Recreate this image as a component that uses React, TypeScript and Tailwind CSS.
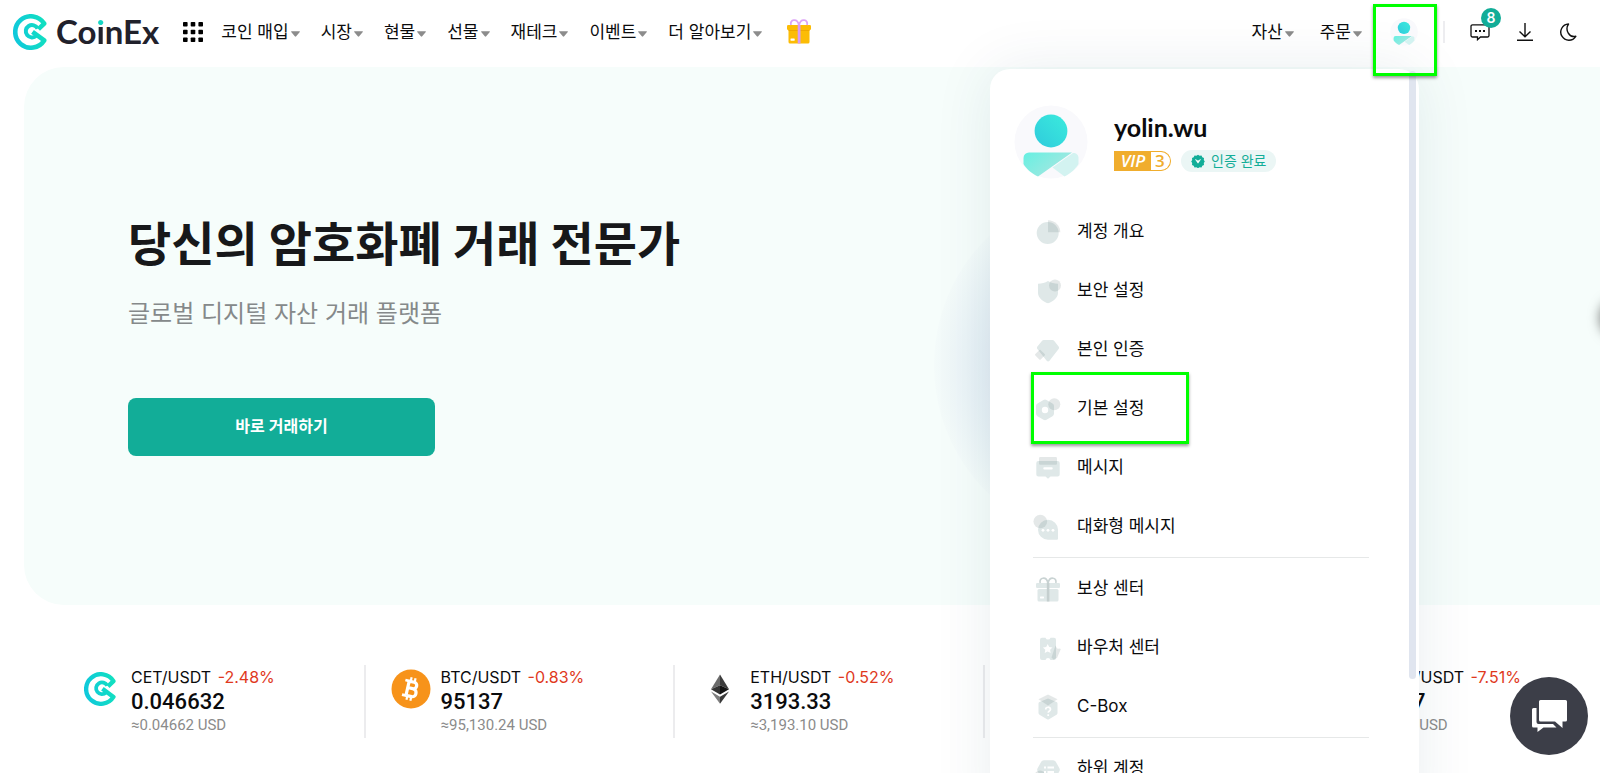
import React from "react";

const BASE = "#dfe8e8";
const TINT = "#5f7474";

function CoinExMark({ className, id }: { className: string; id: string }) {
  return (
    <svg viewBox="0 0 36 36" className={className} fill="none" aria-hidden="true">
      <defs>
        <linearGradient id={id} x1="0" y1="18" x2="36" y2="12" gradientUnits="userSpaceOnUse">
          <stop offset="0" stopColor="#0fc8dc" />
          <stop offset="1" stopColor="#12e2bd" />
        </linearGradient>
      </defs>
      <g stroke={`url(#${id})`} strokeWidth="4.6" strokeLinejoin="round">
        <path d="M25.400 15.200 31.200 9.600A15.700 15.700 0 1 0 31.200 26.400L19.500 17.800" />
        <path d="M24.600 14.600A6.200 6.200 0 1 0 23.400 21.600" strokeWidth="4" />
      </g>
    </svg>
  );
}

function Avatar({ className, id }: { className: string; id: string }) {
  return (
    <svg viewBox="0 0 74 74" className={className} aria-hidden="true">
      <defs>
        <linearGradient id={`${id}-head`} x1="0" y1="1" x2="1" y2="0">
          <stop offset="0" stopColor="#2fcbdc" />
          <stop offset="1" stopColor="#3bebdd" />
        </linearGradient>
        <linearGradient id={`${id}-body`} x1="0" y1="0" x2="1" y2="0.6">
          <stop offset="0" stopColor="#66f0e2" />
          <stop offset="1" stopColor="#a9e6e0" />
        </linearGradient>
      </defs>
      <circle cx="37" cy="37" r="36.5" fill="#f9f9fc" />
      <circle cx="37" cy="26" r="16.4" fill={`url(#${id}-head)`} />
      <path d="M15 47.500h43L24 71.500C17 68 12 63.500 9.500 59V53a5.500 5.500 0 0 1 5.500-5.500Z" fill={`url(#${id}-body)`} />
      <path d="m38.500 62.500 20.500-14.500c3.500 0 5.500 2 5.500 5v6C62 63.500 57 68 50.500 71.500Z" fill="#d3f3f1" />
    </svg>
  );
}

function Caret() {
  return (
    <svg viewBox="0 0 9 6" className="mt-1 h-1.5 w-[9px] fill-[#8c8c8c]" aria-hidden="true">
      <path d="M.6.2h7.800c.5 0 .7.5.4.9L5.200 5.300a.9.9 0 0 1-1.400 0L.2 1.100C-.1.700.1.200.6.200Z" />
    </svg>
  );
}

function NavItem({ label }: { label: string }) {
  return (
    <button type="button" className="flex items-center gap-0.5 whitespace-nowrap text-[17px] leading-6">
      {label}
      <Caret />
    </button>
  );
}

function GiftColor() {
  return (
    <svg viewBox="0 0 24 25" className="h-[25px] w-6" fill="none" aria-hidden="true">
      <rect x="1.500" y="8" width="21" height="16.500" rx="1.500" fill="#fcbc05" />
      <rect x="0" y="6" width="24" height="5" rx="1.200" fill="#fcbc05" />
      <path d="M1.500 11h21v1h-21z" fill="#f0a800" />
      <rect x="10.700" y="6" width="2.800" height="18.500" fill="#d79af5" />
      <path d="M11.800 6C11.200 2.500 9 .9 6.800 1.100 4.500 1.300 3.300 3.500 4 6M12.200 6c.6-3.500 2.800-5.100 5-4.900 2.300.2 3.500 2.400 2.800 4.900" stroke="#dca4f7" strokeWidth="1.800" />
      <rect x="3.500" y="19.500" width="4.200" height="2.200" rx=".4" fill="#fff" />
    </svg>
  );
}

const menuIcons: Record<string, React.ReactNode> = {
  overview: (
    <>
      <circle cx="12.700" cy="14" r="11" fill={BASE} />
      <path d="M13 13.300V1.200a12.200 12.200 0 0 1 12.300 12.100Z" fill={TINT} opacity=".17" />
    </>
  ),
  security: (
    <>
      <path d="M3 5.800c4 0 7-1 10-2.800 3 1.800 6 2.800 10 2.800V15c0 5-5.500 8.800-10 10.300C8.500 23.800 3 20 3 15Z" fill={BASE} />
      <circle cx="20" cy="7.600" r="6" fill={TINT} opacity=".17" />
    </>
  ),
  identity: (
    <>
      <path d="M8.800 3h8.600c.8 0 1.400.3 1.900 1l4.300 5.600c.6.8.6 1.700 0 2.500l-9.100 11.700c-.8 1-2 1-2.800 0L2.400 12.100c-.6-.8-.6-1.700 0-2.500L6.900 4c.5-.7 1.100-1 1.900-1Z" fill={BASE} />
      <rect x="1.200" y="14" width="7.600" height="7.600" rx="1" transform="rotate(45 5 17.800)" fill={TINT} opacity=".17" />
    </>
  ),
  preferences: (
    <>
      <path fillRule="evenodd" d="M8.500 4a3 3 0 0 1 3 0l6 3.400a3 3 0 0 1 1.500 2.600v7.600a3 3 0 0 1-1.500 2.600l-6 3.500a3 3 0 0 1-3 0l-6-3.500A3 3 0 0 1 1 17.600V10a3 3 0 0 1 1.500-2.600ZM10 10.800a3.200 3.200 0 1 0 0 6.400 3.200 3.200 0 0 0 0-6.400Z" fill={BASE} />
      <circle cx="19.300" cy="8.300" r="6" fill={TINT} opacity=".17" />
    </>
  ),
  message: (
    <>
      <path d="M3.300 6h19.400a2 2 0 0 1 2 2v11.500a2 2 0 0 1-2 2H15.500L13 23.800l-2.500-2.300H3.300a2 2 0 0 1-2-2V8a2 2 0 0 1 2-2Z" fill={BASE} />
      <rect x="4" y="2" width="18" height="7.700" rx="1.200" fill={TINT} opacity=".17" />
      <rect x="8.300" y="12.200" width="9.400" height="2.200" rx="1" fill="#fff" />
    </>
  ),
  chat: (
    <>
      <path d="M13 5.800a10 10 0 0 1 10 10v9a1 1 0 0 1-1 1h-9a10 10 0 0 1 0-20Z" fill={BASE} />
      <circle cx="5.300" cy="7.500" r="6.800" fill={TINT} opacity=".17" />
      <g fill="#fff">
        <circle cx="8" cy="16.300" r="1.400" />
        <circle cx="13" cy="16.300" r="1.400" />
        <circle cx="18" cy="16.300" r="1.400" />
      </g>
    </>
  ),
  reward: (
    <>
      <rect x="1" y="7" width="24" height="5" rx="1.200" fill={BASE} />
      <rect x="2.500" y="13" width="21" height="12.500" rx="1.500" fill={BASE} />
      <rect x="11.800" y="7" width="2.600" height="18.500" fill="#c5cfcf" />
      <path d="M12.800 7c-.6-3.500-2.600-5-4.800-4.800C5.700 2.400 4.500 4.500 5.200 7M13.200 7c.6-3.500 2.600-5 4.800-4.800 2.300.2 3.500 2.300 2.800 4.800" stroke="#c9d3d3" strokeWidth="1.600" fill="none" />
      <rect x="5" y="20.500" width="4" height="2" rx=".4" fill="#fff" />
    </>
  ),
  voucher: (
    <>
      <path d="M7 2.700h3.500a2.600 2.600 0 0 0 5 0H19a2 2 0 0 1 2 2V23a2 2 0 0 1-2 2h-3.500a2.600 2.600 0 0 0-5 0H7a2 2 0 0 1-2-2V4.700a2 2 0 0 1 2-2Z" fill={BASE} />
      <path d="m20.500 10.500 1 2a2 2 0 0 0 2.700.9l1.600.5L22 23l-3.500 1.500-2-2Z" fill={TINT} opacity=".17" />
      <path d="m12.700 9 1.500 3.100 3.300.4-2.400 2.300.6 3.300-3-1.600-3 1.600.6-3.300-2.400-2.300 3.300-.4Z" fill="#fff" />
    </>
  ),
  box: (
    <>
      <path d="m13 4.500 8.500 3.600c.6.300 1 .8 1 1.400v9.500c0 .7-.4 1.400-1 1.700L14 25.200a2 2 0 0 1-2 0l-7.500-4.500c-.6-.3-1-1-1-1.700V9.500c0-.6.4-1.100 1-1.400Z" fill={BASE} />
      <path d="m13 .5 9.500 4.700L13 11.500 3.500 5.200Z" fill={TINT} opacity=".17" />
      <path d="M10.700 15.500c0-3 4.800-3 4.800-.2 0 1.700-2.300 1.700-2.300 3.500M13.200 20.200v1.700" stroke="#fff" strokeWidth="1.700" fill="none" />
    </>
  ),
  sub: (
    <>
      <path d="M8.800 4.300h9.400a3 3 0 0 1 2.600 1.500l3.600 6.400a3 3 0 0 1 0 3l-3.600 6.400a3 3 0 0 1-2.600 1.500H8.800a3 3 0 0 1-2.600-1.500l-3.600-6.400a3 3 0 0 1 0-3l3.600-6.400a3 3 0 0 1 2.600-1.500Z" fill={BASE} />
      <circle cx="5" cy="20" r="5.500" fill={TINT} opacity=".17" />
      <path d="M9 11.500h2M12.500 11.500h6.500M9 16h2M12.500 16h6.500" stroke="#fff" strokeWidth="1.800" />
    </>
  ),
};

type Entry = { label: string; icon: string; marked?: boolean };

const groups: Entry[][] = [
  [
    { label: "계정 개요", icon: "overview" },
    { label: "보안 설정", icon: "security" },
    { label: "본인 인증", icon: "identity" },
    { label: "기본 설정", icon: "preferences", marked: true },
    { label: "메시지", icon: "message" },
    { label: "대화형 메시지", icon: "chat" },
  ],
  [
    { label: "보상 센터", icon: "reward" },
    { label: "바우처 센터", icon: "voucher" },
    { label: "C-Box", icon: "box" },
  ],
  [{ label: "하위 계정", icon: "sub" }],
];

function MenuRow({ entry }: { entry: Entry }) {
  return (
    <li className="relative">
      <a href="#" className="flex h-[59px] items-center gap-4 px-0.5 text-[17px]">
        <svg viewBox="0 0 26 26" className="size-[26px] shrink-0 overflow-visible" aria-hidden="true">
          {menuIcons[entry.icon]}
        </svg>
        <span>{entry.label}</span>
      </a>
      {entry.marked && (
        <span className="pointer-events-none absolute -top-[7px] -left-0.5 h-[72px] w-[158px] border-[3px] border-[#00ff00] shadow-[0_2px_3px_rgba(0,0,0,0.4)]" />
      )}
    </li>
  );
}

function AccountPanel() {
  return (
    <aside className="absolute top-[69px] right-[181px] -bottom-16 z-10 w-[429px] rounded-[20px] bg-white shadow-[0_0_60px_rgba(0,70,90,0.09)]">
      <div className="flex items-start gap-[26px] pt-9 pl-6">
        <Avatar className="size-[74px]" id="panel" />
        <div className="pt-1.5">
          <div className="font-[Lato,'Liberation_Sans',sans-serif] text-[25px] leading-8 font-bold">yolin.wu</div>
          <div className="mt-[7px] flex items-center gap-2.5">
            <span className="flex h-5 w-[57px] items-stretch rounded-l-sm rounded-r-full border border-[#f0ad2d] bg-[#f0ad2d] font-['Open_Sans',sans-serif] text-[17px] leading-[18px]">
              <span className="w-9 text-center font-semibold text-white italic">VIP</span>
              <span className="grow rounded-r-full bg-white pl-1 font-semibold text-[#f0ad2d]">3</span>
            </span>
            <span className="flex h-[22px] items-center gap-1.5 rounded-full bg-[#ebf6f5] px-2.5 text-sm text-[#12ad98]">
              <svg viewBox="0 0 14 14" className="size-3.5" aria-hidden="true">
                <path d="m7 .8 1.600 1 1.900-.2.8 1.700 1.700.8-.2 1.900 1 1.500-1 1.600.2 1.900-1.700.8-.8 1.700-1.900-.2-1.600.9-1.600-.9-1.900.2-.8-1.700-1.700-.8.2-1.900-1-1.600 1-1.500-.2-1.900 1.700-.8.8-1.700 1.900.2Z" fill="#12ad98" />
                <path d="M4.500 5.500 7 9.200l2.500-3.700L7 6.900Z" fill="#fff" stroke="#fff" strokeWidth=".6" />
              </svg>
              인증 완료
            </span>
          </div>
        </div>
      </div>
      <nav className="mt-[23px] mr-[50px] ml-[43px]">
        {groups.map((group, index) => (
          <ul key={index} className={index > 0 ? "mt-px border-t border-[#e6e8e8] pt-px" : ""}>
            {group.map((entry) => (
              <MenuRow key={entry.label} entry={entry} />
            ))}
          </ul>
        ))}
      </nav>
      <div className="absolute top-0.5 right-[3px] h-[608px] w-[7px] rounded-full bg-[#e0e5ef]" />
    </aside>
  );
}

function Bitcoin() {
  return (
    <svg viewBox="0 0 40 40" className="size-10" aria-hidden="true">
      <circle cx="20" cy="20" r="19.500" fill="#f7931a" />
      <g transform="rotate(13 20 20)" fill="none" stroke="#fff">
        <path d="M16.500 12.500V27.500M16.500 12.700H21.500C26 12.700 26 19.300 21.500 19.300H16.500M21.500 19.300H22.300C27 19.300 27 27.300 22.300 27.300H16.500" strokeWidth="3.200" />
        <path d="M12.500 12.500H17M12.500 27.500H17" strokeWidth="2.800" />
        <path d="M18 8.500V12.500M22 8.500V12.500M18 27.500V31.500M22 27.500V31.500" strokeWidth="2.200" />
      </g>
    </svg>
  );
}

function Ethereum() {
  return (
    <svg viewBox="0 0 40 40" className="size-10" aria-hidden="true">
      <path d="M20 5.500 11 20.300 20 16.200Z" fill="#6b6b6b" />
      <path d="m20 5.500 9 14.800-9-4.100Z" fill="#3d3d3d" />
      <path d="m11 20.300 9-4.100v9.400Z" fill="#343434" />
      <path d="m29 20.300-9-4.100v9.400Z" fill="#141414" />
      <path d="m11 22.400 9 5.300v7Z" fill="#7d7d7d" />
      <path d="m29 22.400-9 5.300v7Z" fill="#3a3a3a" />
    </svg>
  );
}

type Ticker = { pair: string; change: string; price: string; usd: string; icon: React.ReactNode };

const tickers: (Ticker | null)[] = [
  { pair: "CET/USDT", change: "-2.48%", price: "0.046632", usd: "≈0.04662 USD", icon: <CoinExMark className="size-[34px]" id="cet" /> },
  { pair: "BTC/USDT", change: "-0.83%", price: "95137", usd: "≈95,130.24 USD", icon: <Bitcoin /> },
  { pair: "ETH/USDT", change: "-0.52%", price: "3193.33", usd: "≈3,193.10 USD", icon: <Ethereum /> },
  null,
  { pair: "DOGE/USDT", change: "-7.51%", price: "0.327", usd: "≈0.327 USD", icon: null },
];

export default function App() {
  return (
    <div className="relative min-h-screen overflow-hidden bg-white font-[Inter,'Noto_Sans_CJK_KR',sans-serif] text-[#0b0b0d]">
      <header className="flex h-[67px] items-center justify-between pr-[22px] pb-1 pl-[13px]">
        <div className="flex items-center">
          <a href="#" className="flex items-center gap-[7px]" aria-label="CoinEx">
            <CoinExMark className="size-9" id="brand" />
            <span className="pb-0.5 font-[Lato,'Liberation_Sans',sans-serif] text-[33px] leading-9 font-bold text-[#21212b]">
              Co
              <span className="bg-[linear-gradient(to_bottom,#16d6c4_38%,#21212b_38%)] bg-clip-text text-transparent">i</span>
              nEx
            </span>
          </a>
          <button type="button" className="ml-6" aria-label="전체 메뉴">
            <svg viewBox="0 0 20 20" className="size-5" aria-hidden="true">
              {[0, 7.7, 15.4].map((y) =>
                [0, 7.7, 15.4].map((x) => <rect key={`${x}-${y}`} x={x} y={y} width="4.6" height="4.6" rx=".8" />),
              )}
            </svg>
          </button>
          <nav className="ml-[18px] flex items-center gap-[21px]">
            {["코인 매입", "시장", "현물", "선물", "재테크", "이벤트", "더 알아보기"].map((label) => (
              <NavItem key={label} label={label} />
            ))}
            <a href="#" aria-label="보상" className="ml-1">
              <GiftColor />
            </a>
          </nav>
        </div>
        <div className="flex items-center">
          <div className="flex gap-[26px]">
            <NavItem label="자산" />
            <NavItem label="주문" />
          </div>
          <button type="button" className="relative z-20 ml-7" aria-label="내 계정">
            <Avatar className="size-7" id="nav" />
            <span className="pointer-events-none absolute -top-3.5 -left-[17px] h-[72px] w-16 border-[3px] border-[#00ff00] shadow-[0_2px_3px_rgba(0,0,0,0.4)]" />
          </button>
          <span className="ml-[25px] h-[22px] w-0.5 bg-[#ededf0]" />
          <button type="button" className="relative ml-[25px]" aria-label="메시지 8">
            <svg viewBox="0 0 20 18" className="h-[18px] w-5" fill="none" aria-hidden="true">
              <path d="M2.500 1.800h15a1.500 1.500 0 0 1 1.500 1.500v9.200a1.500 1.500 0 0 1-1.500 1.500H10.500L7.500 16.700V14h-5A1.500 1.500 0 0 1 1 12.500V3.300a1.500 1.500 0 0 1 1.500-1.500Z" stroke="#111" strokeWidth="1.300" />
              <path d="M5 7h2v2H5zM9 7h2v2H9zM13 7h2v2h-2z" fill="#111" />
            </svg>
            <span className="absolute -top-[15px] left-[11px] flex size-5 items-center justify-center rounded-full bg-[#12ad98] text-sm font-semibold text-white">8</span>
          </button>
          <button type="button" className="ml-[26px]" aria-label="다운로드">
            <svg viewBox="0 0 18 18" className="size-[18px]" fill="none" stroke="#111" strokeWidth="1.400" aria-hidden="true">
              <path d="M9 0v13.500M3.500 8.500 9 13.800l5.500-5.300M1 17.200h16" />
            </svg>
          </button>
          <button type="button" className="ml-[26px]" aria-label="어두운 화면">
            <svg viewBox="0 0 18 18" className="size-[18px]" fill="none" stroke="#111" strokeWidth="1.400" strokeLinejoin="round" aria-hidden="true">
              <path d="M8.500 1A8.100 8.100 0 1 0 15.800 13.300C9.500 15 4.500 7 8.500 1Z" />
            </svg>
          </button>
        </div>
      </header>

      <section className="relative ml-6 h-[538px] overflow-hidden rounded-l-[40px] bg-[#f6fdfb]">
        <div className="absolute top-[119px] left-[910px] size-[358px] rounded-full bg-[radial-gradient(circle_closest-side,#d9e5f0_50%,#e5eff5_72%,#f4fbfa_100%)]" />
        <div className="relative pt-[145px] pl-[104px]">
          <h1 className="text-[47px] leading-[64px] font-bold text-[#17181a]">당신의 암호화폐 거래 전문가</h1>
          <p className="mt-5 text-2xl leading-9 text-[#85898a]">글로벌 디지털 자산 거래 플랫폼</p>
          <button type="button" className="mt-[66px] h-[58px] w-[307px] rounded-lg bg-[#12ad98] pb-0.5 text-base font-semibold text-white">
            바로 거래하기
          </button>
        </div>
        <button
          type="button"
          aria-label="다음"
          className="absolute top-[231px] -right-10 size-10 rounded-full bg-white shadow-[0_0_12px_rgba(0,0,0,0.5)]"
        />
      </section>

      <section className="-mr-1 ml-14 grid grid-cols-5 pt-[60px] pb-[35px]">
        {tickers.map((t, index) =>
          t ? (
            <div key={t.pair} className="flex h-[73px] border-r-2 border-[#ececee] pl-[25px] last:border-r-0">
              <div className="flex h-12 w-10 shrink-0 items-center justify-center">{t.icon}</div>
              <div className="ml-2.5 whitespace-nowrap">
                <div className="text-base leading-6">
                  {t.pair} <span className="ml-0.5 text-[#e0391d]">{t.change}</span>
                </div>
                <div className="font-[Roboto,sans-serif] text-[22px] leading-[26px] font-medium">{t.price}</div>
                <div className="font-[Roboto,sans-serif] text-[15px] leading-5 text-[#8b8b8b]">{t.usd}</div>
              </div>
            </div>
          ) : (
            <div key={index} />
          ),
        )}
      </section>

      <AccountPanel />

      <button
        type="button"
        aria-label="채팅 상담"
        className="absolute right-3 bottom-[18px] z-20 flex size-[78px] items-center justify-center rounded-full bg-[#3c3e48]"
      >
        <svg viewBox="0 0 36 34" className="h-[34px] w-9 fill-white" aria-hidden="true">
          <path d="M9.500 1h25a1.500 1.500 0 0 1 1.500 1.500V21a1.500 1.500 0 0 1-1.500 1.500h-3V29L24 22.500H9.500A1.500 1.500 0 0 1 8 21V2.500A1.500 1.500 0 0 1 9.500 1Z" />
          <path d="M2.500 9H5.500v14A2 2 0 0 0 7.500 25H22l3.500 3.500H12.500L6.500 33V28.500H2.500A1.500 1.500 0 0 1 1 27V10.500A1.500 1.500 0 0 1 2.500 9Z" />
        </svg>
      </button>
    </div>
  );
}
